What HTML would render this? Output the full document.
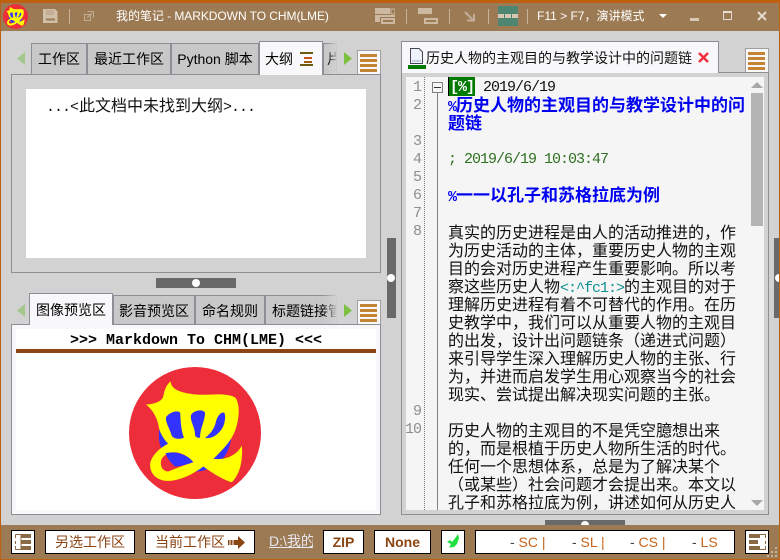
<!DOCTYPE html>
<html><head><meta charset="utf-8"><style>
html,body{margin:0;padding:0}
body{width:780px;height:560px;position:relative;overflow:hidden;background:#d2d2d2;font-family:"Liberation Sans","WenQuanYi Zen Hei","Noto Sans CJK SC",sans-serif;color:#000}
.a{position:absolute;box-sizing:border-box;white-space:nowrap}
.tab{position:absolute;box-sizing:border-box;background:#c8c8c8;border:1px solid #8e8e96;border-bottom:none;font-size:14px;line-height:31px;text-align:center;white-space:nowrap;overflow:hidden}
.on{background:#f8f8fa;border:1px solid #8e8e96;border-bottom:none;z-index:2}
.panel{position:absolute;box-sizing:border-box;border:1px solid #8e8e96}
.btn{position:absolute;box-sizing:border-box;background:#fff;border:1px solid #000;top:530px;height:24px;color:#8b4513;text-align:center;font-size:14px;line-height:22px;white-space:nowrap}
.ln{position:absolute;left:404px;width:17px;text-align:right;font:15px/18px "Liberation Mono",monospace;letter-spacing:-1px;color:#8e8e8e}
.t{position:absolute;left:448px;font-size:16px;line-height:18px;white-space:nowrap;font-family:"WenQuanYi Zen Hei","Noto Sans CJK SC",sans-serif;color:#111}
.b{color:#0000f0;font-weight:bold;font-size:17px}
.m{font:15px/18px "Liberation Mono",monospace;letter-spacing:-1px}
.mb{font:bold 15px/18px "Liberation Mono",monospace;letter-spacing:-1px}
.sep{position:absolute;top:9px;width:1px;height:15px;background:#c8b49c}
.grip div{position:absolute;background:#c8b49c}
</style></head><body>
<!-- title bar -->
<div class="a" style="left:0;top:0;width:780px;height:31px;background:#9c7a54;border-top:3px solid #bf5f10"></div>
<div class="a" style="left:0;top:0;width:1px;height:560px;background:#bf5f10;z-index:5"></div>
<div class="a" style="left:779px;top:0;width:1px;height:560px;background:#bf5f10;z-index:5"></div>
<svg class="a" style="left:3px;top:4px" width="25" height="25" viewBox="88 21 394 394"><circle cx="285" cy="218" r="197" fill="#ee2d3a"/><circle cx="285" cy="225" r="108" fill="#3333ff"/><path fill="#ff0" d="M138 133C160 132 185 125 190 110C195 85 200 75 212 64C214 85 235 100 300 104C340 104 380 98 405 112C420 130 418 175 405 210C392 245 365 270 340 295C375 300 410 285 425 255C428 300 420 340 395 365C370 358 340 340 310 318C280 340 240 362 200 361C170 358 150 340 151 310C155 285 180 262 205 250C190 235 178 215 175 190C168 165 155 145 138 133Z"/><path fill="#3333ff" d="M199 170C210 155 235 148 241 158C242 190 245 215 252 232C235 238 220 235 215 225C210 205 195 185 199 170ZM273 165C280 150 310 145 315 158C315 180 300 205 300 232C290 232 285 230 285 222C285 200 270 185 273 165ZM346 190C350 170 360 155 372 157C378 165 375 195 362 210C350 225 335 235 315 233C330 222 342 205 346 190Z"/><path fill="#ee2d3a" d="M183 305C186 285 205 275 230 276C255 280 270 295 280 305C250 315 225 325 205 333C190 332 182 320 183 305Z"/><path fill="#3333ff" d="M197 279C225 270 262 282 280 305C262 312 240 318 225 318C210 305 202 292 197 279Z"/></svg>
<svg class="a" style="left:43px;top:9px" width="15" height="14"><path d="M0 0H12L14.500 2.500V14H0Z" fill="#d2bfa8"/><rect x="3" y="1" width="8" height="5" fill="#c4ad94"/><rect x="3" y="9.500" width="9" height="2" fill="#9c7a54"/></svg>
<div class="sep" style="left:69px"></div>
<svg class="a" style="left:84px;top:11px" width="10" height="10"><path d="M0.500 3.500H6.500V9.500H0.500ZM3.500 0.500H9.500V6.500" fill="none" stroke="#c2ae97"/><path d="M3 7L8 2" stroke="#c2ae97"/></svg>
<div class="a" style="left:116px;top:7px;font-size:12px;line-height:18px;color:#fff;letter-spacing:-.05px">我的笔记 - MARKDOWN TO CHM(LME)</div>
<!-- toolbar icons -->
<svg class="a" style="left:375px;top:8px" width="20" height="16"><rect x="0" y="0" width="15" height="6" fill="#cdb9a2"/><rect x="16" y="1" width="4" height="5" fill="none" stroke="#cdb9a2"/><rect x="0" y="7" width="20" height="2" fill="#cdb9a2"/><rect x="0" y="9" width="5" height="5" fill="#cdb9a2"/><rect x="7" y="11" width="12" height="4" fill="none" stroke="#cdb9a2" stroke-width="2"/></svg>
<div class="sep" style="left:406px"></div>
<svg class="a" style="left:418px;top:8px" width="20" height="17"><rect x="0" y="0" width="14" height="6" fill="#cdb9a2"/><rect x="7" y="11" width="12" height="4" fill="none" stroke="#cdb9a2" stroke-width="2"/></svg>
<div class="sep" style="left:449px"></div>
<svg class="a" style="left:464px;top:11px" width="12" height="11"><path d="M1 1L9 9M3 9.500H10V3" fill="none" stroke="#c2ae97" stroke-width="2"/></svg>
<div class="sep" style="left:488px"></div>
<div class="a" style="left:498px;top:6px;width:20px;height:20px;background:#4e8570"></div>
<div class="a" style="left:498px;top:14px;width:20px;height:4px;background:repeating-linear-gradient(90deg,#d8c8b4 0 6px,#4e8570 6px 7px)"></div>
<div class="sep" style="left:527px"></div>
<div class="a" style="left:537px;top:8px;font-size:12px;line-height:17px;color:#fff">F11 &gt; F7，演讲模式</div>
<div class="a" style="left:659px;top:14px;width:0;height:0;border:4px solid transparent;border-top:4px solid #fff;border-bottom:none"></div>
<div class="a" style="left:690px;top:18px;width:9px;height:3px;background:#d8c8b4"></div>
<div class="a" style="left:723px;top:11px;width:9px;height:9px;border:1px solid #e4dacd;border-top-width:2px"></div>
<svg class="a" style="left:757px;top:11px" width="10" height="10"><path d="M1 1L9 9M9 1L1 9" stroke="#e4dacd" stroke-width="2"/></svg>
<!-- left top tabs -->
<svg class="a" style="left:17px;top:52px" width="9" height="13"><path d="M8 0V13L0 6.500Z" fill="#a4c88c"/></svg>
<div class="tab" style="left:31px;top:43px;width:56px;height:31px">工作区</div>
<div class="tab" style="left:87px;top:43px;width:84px;height:31px">最近工作区</div>
<div class="tab" style="left:171px;top:43px;width:88px;height:31px">Python 脚本</div>
<div class="tab on" style="left:259px;top:41px;width:64px;height:34px;text-align:left;padding-left:5px;line-height:35px">大纲</div>
<svg class="a" style="left:300px;top:52px;z-index:3" width="13" height="14"><rect x="0" y="0" width="13" height="2" fill="#6b5a10"/><rect x="4" y="5" width="8" height="2" fill="#c8501a"/><rect x="4" y="9" width="8" height="2" fill="#a05a10"/><rect x="0" y="12" width="13" height="2" fill="#6b5a10"/></svg>
<div class="tab" style="left:323px;top:43px;width:14px;height:31px;text-align:left;padding-left:3px">片</div>
<div class="a" style="left:327px;top:42px;width:11px;height:32px;background:linear-gradient(90deg,rgba(210,210,210,0),#d2d2d2)"></div>
<svg class="a" style="left:343px;top:52px" width="9" height="13"><path d="M1 0V13L9 6.500Z" fill="#7cc040"/></svg>
<svg class="a" style="left:357px;top:50px" width="24" height="25"><rect x=".5" y=".5" width="23" height="24" fill="#f8f8fa" stroke="#a0a0a0"/><g fill="#c48434"><rect x="3" y="4" width="17" height="3"/><rect x="3" y="9" width="17" height="3"/><rect x="3" y="14" width="17" height="3"/><rect x="3" y="19" width="17" height="3"/></g></svg>
<div class="panel" style="left:11px;top:74px;width:370px;height:199px"></div>
<div class="a" style="left:26px;top:89px;width:340px;height:169px;background:#fff"></div>
<div class="a" style="left:46px;top:95px;font-size:16px;line-height:18px;font-family:'WenQuanYi Zen Hei','Noto Sans CJK SC',sans-serif;color:#111"><span class="m" style="letter-spacing:-1px">...&lt;</span><span style="margin-left:1px">此文档中未找到大纲</span><span class="m">&gt;...</span></div>
<div class="a" style="left:156px;top:278px;width:80px;height:10px;background:#696969"></div>
<div class="a" style="left:192px;top:279px;width:8px;height:8px;border-radius:50%;background:#fff"></div>
<!-- lower tabs -->
<svg class="a" style="left:17px;top:304px" width="9" height="13"><path d="M8 0V13L0 6.500Z" fill="#a4c88c"/></svg>
<div class="tab on" style="left:29px;top:293px;width:84px;height:32px;line-height:32px">图像预览区</div>
<div class="tab" style="left:113px;top:295px;width:82px;height:29px">影音预览区</div>
<div class="tab" style="left:195px;top:295px;width:70px;height:29px">命名规则</div>
<div class="tab" style="left:265px;top:295px;width:72px;height:29px;text-align:left;padding-left:6px">标题链接管</div>
<div class="a" style="left:323px;top:294px;width:15px;height:30px;background:linear-gradient(90deg,rgba(210,210,210,0),#d2d2d2)"></div>
<svg class="a" style="left:343px;top:304px" width="9" height="13"><path d="M1 0V13L9 6.500Z" fill="#7cc040"/></svg>
<svg class="a" style="left:357px;top:300px" width="24" height="25"><rect x=".5" y=".5" width="23" height="24" fill="#f8f8fa" stroke="#a0a0a0"/><g fill="#c48434"><rect x="3" y="4" width="17" height="3"/><rect x="3" y="9" width="17" height="3"/><rect x="3" y="14" width="17" height="3"/><rect x="3" y="19" width="17" height="3"/></g></svg>
<div class="panel" style="left:11px;top:324px;width:370px;height:191px;background:#f8f8fa"></div>
<div class="a" style="left:16px;top:329px;width:360px;height:181px;background:#fff"></div>
<div class="a" style="left:16px;top:332px;width:360px;text-align:center;font:bold 15px/18px 'Liberation Mono',monospace">&gt;&gt;&gt; Markdown To CHM(LME) &lt;&lt;&lt;</div>
<div class="a" style="left:16px;top:349px;width:360px;height:4px;background:#8b4513"></div>
<svg class="a" style="left:129px;top:367px" width="132" height="132" viewBox="88 21 394 394"><circle cx="285" cy="218" r="197" fill="#ee2d3a"/><circle cx="285" cy="225" r="108" fill="#3333ff"/><path fill="#ff0" d="M138 133C160 132 185 125 190 110C195 85 200 75 212 64C214 85 235 100 300 104C340 104 380 98 405 112C420 130 418 175 405 210C392 245 365 270 340 295C375 300 410 285 425 255C428 300 420 340 395 365C370 358 340 340 310 318C280 340 240 362 200 361C170 358 150 340 151 310C155 285 180 262 205 250C190 235 178 215 175 190C168 165 155 145 138 133Z"/><path fill="#3333ff" d="M199 170C210 155 235 148 241 158C242 190 245 215 252 232C235 238 220 235 215 225C210 205 195 185 199 170ZM273 165C280 150 310 145 315 158C315 180 300 205 300 232C290 232 285 230 285 222C285 200 270 185 273 165ZM346 190C350 170 360 155 372 157C378 165 375 195 362 210C350 225 335 235 315 233C330 222 342 205 346 190Z"/><path fill="#ee2d3a" d="M183 305C186 285 205 275 230 276C255 280 270 295 280 305C250 315 225 325 205 333C190 332 182 320 183 305Z"/><path fill="#3333ff" d="M197 279C225 270 262 282 280 305C262 312 240 318 225 318C210 305 202 292 197 279Z"/></svg>
<!-- splitters -->
<div class="a" style="left:387px;top:238px;width:9px;height:80px;background:#696969"></div>
<div class="a" style="left:387px;top:274px;width:8px;height:8px;border-radius:50%;background:#fff"></div>
<div class="a" style="left:774px;top:238px;width:5px;height:80px;background:#696969"></div>
<div class="a" style="left:775px;top:274px;width:4px;height:8px;background:#fff;border-radius:4px 0 0 4px"></div>
<!-- right tab -->
<div class="tab" style="left:401px;top:41px;width:318px;height:32px;background:#f8f8fa;z-index:2"></div>
<svg class="a" style="left:410px;top:48px;z-index:3" width="13" height="16"><path d="M.5.5H9L12.500 4V15.500H.5Z" fill="#eef2fa" stroke="#445"/><path d="M2 12H11V14H2Z" fill="#c4cce0"/></svg>
<div class="a" style="left:408px;top:65px;width:18px;height:4px;background:#007a00;z-index:3"></div>
<div class="a" style="left:426px;top:49px;font-size:14px;line-height:18px;z-index:3;color:#111">历史人物的主观目的与教学设计中的问题链</div>
<svg class="a" style="left:698px;top:52px;z-index:3" width="11" height="11"><path d="M1 1L10 10M10 1L1 10" stroke="#f03040" stroke-width="2.500"/></svg>
<svg class="a" style="left:745px;top:48px" width="24" height="25"><rect x=".5" y=".5" width="23" height="24" fill="#f8f8fa" stroke="#a0a0a0"/><g fill="#c48434"><rect x="3" y="4" width="17" height="3"/><rect x="3" y="9" width="17" height="3"/><rect x="3" y="14" width="17" height="3"/><rect x="3" y="19" width="17" height="3"/></g></svg>
<div class="panel" style="left:401px;top:72px;width:368px;height:443px"></div>
<div class="a" style="left:406px;top:77px;width:358px;height:433px;background:#f5f5f5"></div>
<div class="a" style="left:424px;top:77px;width:0;height:433px;border-left:1px dotted #777"></div>
<div class="a" style="left:437px;top:92px;width:1px;height:418px;background:#808080"></div>
<div class="a" style="left:432px;top:82px;width:11px;height:11px;border:1px solid #808080;background:#f5f5f5"></div>
<div class="a" style="left:434px;top:87px;width:7px;height:1px;background:#333"></div>
<!-- line numbers -->
<div class="ln" style="top:79px">1</div>
<div class="ln" style="top:97px">2</div>
<div class="ln" style="top:133px">3</div>
<div class="ln" style="top:151px">4</div>
<div class="ln" style="top:169px">5</div>
<div class="ln" style="top:187px">6</div>
<div class="ln" style="top:205px">7</div>
<div class="ln" style="top:223px">8</div>
<div class="ln" style="top:403px">9</div>
<div class="ln" style="top:421px">10</div>
<!-- editor text -->
<div class="a" style="left:448px;top:77px;width:27px;height:19px;background:#007a00;border-left:1px solid #000"></div>
<div class="t mb" style="top:79px;left:450px;color:#fff">[%]</div>
<div class="t m" style="top:79px;left:483px">2019/6/19</div>
<div class="t b" style="top:95px"><span class="mb">%</span>历史人物的主观目的与教学设计中的问</div>
<div class="t b" style="top:113px">题链</div>
<div class="t m" style="top:151px;color:#2e7020">; 2019/6/19 10:03:47</div>
<div class="t b" style="top:185px"><span class="mb">%</span>一一以孔子和苏格拉底为例</div>
<div class="t" style="top:222px">真实的历史进程是由人的活动推进的，作</div>
<div class="t" style="top:240px">为历史活动的主体，重要历史人物的主观</div>
<div class="t" style="top:258px">目的会对历史进程产生重要影响。所以考</div>
<div class="t" style="top:276px">察这些历史人物<span class="m" style="color:#109090">&lt;:^fc1:&gt;</span>的主观目的对于</div>
<div class="t" style="top:294px">理解历史进程有着不可替代的作用。在历</div>
<div class="t" style="top:312px">史教学中，我们可以从重要人物的主观目</div>
<div class="t" style="top:330px">的出发，设计出问题链条（递进式问题）</div>
<div class="t" style="top:348px">来引导学生深入理解历史人物的主张、行</div>
<div class="t" style="top:366px">为，并进而启发学生用心观察当今的社会</div>
<div class="t" style="top:384px">现实、尝试提出解决现实问题的主张。</div>
<div class="t" style="top:420px">历史人物的主观目的不是凭空臆想出来</div>
<div class="t" style="top:438px">的，而是根植于历史人物所生活的时代。</div>
<div class="t" style="top:456px">任何一个思想体系，总是为了解决某个</div>
<div class="t" style="top:474px">（或某些）社会问题才会提出来。本文以</div>
<div class="t" style="top:492px;height:18px;overflow:hidden">孔子和苏格拉底为例，讲述如何从历史人</div>
<!-- scrollbar -->
<div class="a" style="left:751px;top:82px;width:0;height:0;border:6px solid transparent;border-bottom:6px solid #a8a8a8;border-top:none"></div>
<div class="a" style="left:751px;top:93px;width:12px;height:133px;background:#b4b4b4"></div>
<div class="a" style="left:751px;top:500px;width:0;height:0;border:6px solid transparent;border-top:6px solid #a8a8a8;border-bottom:none"></div>
<!-- bottom -->
<div class="a" style="left:545px;top:520px;width:80px;height:5px;background:#696969"></div>
<div class="a" style="left:581px;top:521px;width:8px;height:4px;border-radius:4px 4px 0 0;background:#fff"></div>
<div class="a" style="left:0;top:525px;width:780px;height:35px;background:#9c7a54;border-bottom:1px solid #bf5f10"></div>
<div class="btn" style="left:11px;width:24px"></div>
<svg class="a" style="left:15px;top:533px" width="17" height="18"><path d="M.5 1.500H7M.5 16.500H7M.5 1.500V5M.5 8V11M.5 13V16.500" fill="none" stroke="#8a6a44"/><path d="M6 1H16V5H6ZM6 7H16V11H6ZM6 13H16V17H6Z" fill="#8a6a44"/><path d="M6 1V17" stroke="#8a6a44" stroke-width="1"/></svg>
<div class="btn" style="left:45px;width:90px">另选工作区</div>
<div class="btn" style="left:145px;width:110px;text-align:left;padding-left:9px">当前工作区</div>
<svg class="a" style="left:228px;top:536px" width="17" height="13"><path d="M0 4H10V0L17 6.500L10 13V9H0Z" fill="#8b4513"/><path d="M2 3V10M5 3V10" stroke="#fff"/></svg>
<div class="a" style="left:269px;top:533px;font-size:14px;line-height:17px;color:#e8e8f0;text-decoration:underline;width:44px;overflow:hidden">D:\我的</div>
<div class="btn" style="left:323px;width:41px;font:bold 14px/22px 'Liberation Sans',sans-serif">ZIP</div>
<div class="btn" style="left:374px;width:57px;font:bold 14px/22px 'Liberation Sans',sans-serif">None</div>
<div class="btn" style="left:441px;width:24px"></div>
<svg class="a" style="left:446px;top:533px" width="15" height="16"><path d="M1 9L4 7L6 9L10 4L12 1L13 5L11 11L8 14L3 14.500L5 11Z" fill="#20e040"/></svg>
<div class="btn" style="left:475px;width:260px;font:14px/22px 'Liberation Sans',sans-serif;color:#c8641a;text-align:left">
<span class="a" style="left:34px;top:0"><span style="color:#444">-</span> SC |</span><span class="a" style="left:96px;top:0"><span style="color:#444">-</span> SL |</span><span class="a" style="left:154px;top:0"><span style="color:#444">-</span> CS |</span><span class="a" style="left:216px;top:0"><span style="color:#444">-</span> LS</span></div>
<div class="btn" style="left:745px;width:24px"></div>
<svg class="a" style="left:749px;top:533px" width="17" height="18"><path d="M0 1H11V5H0ZM0 7H9V11H0ZM0 13H11V17H0Z" fill="#8a6a44"/><path d="M11 1.500H16.500V5M16.500 8V11M16.500 13V16.500H11" fill="none" stroke="#8a6a44"/></svg>
<div class="grip"><div style="left:775px;top:547px;width:2px;height:2px"></div><div style="left:771px;top:551px;width:2px;height:2px"></div><div style="left:775px;top:551px;width:2px;height:2px"></div><div style="left:767px;top:555px;width:2px;height:2px"></div><div style="left:771px;top:555px;width:2px;height:2px"></div><div style="left:775px;top:555px;width:2px;height:2px"></div></div>
</body></html>
